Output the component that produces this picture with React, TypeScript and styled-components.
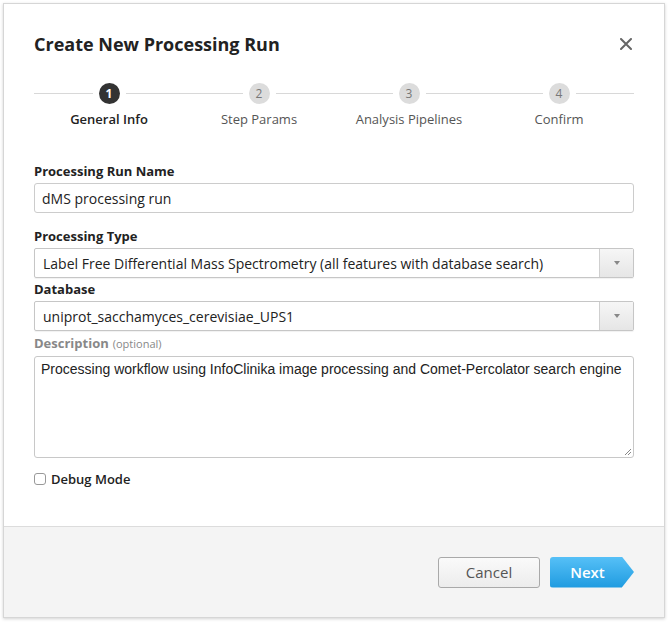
import React from "react";
import styled, { createGlobalStyle } from "styled-components";

const Global = createGlobalStyle`
  html, body { margin: 0; padding: 0; background: #fff; }
  body { font-family: "Open Sans", "Liberation Sans", sans-serif; color: #222; }
  * { box-sizing: border-box; }
`;

const Page = styled.div`
  padding: 3px 5px 5px 3px;
  width: 670px;
  height: 623px;
`;

const Modal = styled.div`
  width: 662px;
  height: 615px;
  border: 1px solid #d6d6d6;
  box-shadow: 0 1px 3px rgba(0,0,0,0.18);
  background: #fff;
  display: flex;
  flex-direction: column;
`;

const Body = styled.div`
  flex: 1;
  padding: 0 30px 0 30px;
  display: flex;
  flex-direction: column;
`;

const Header = styled.div`
  display: flex;
  align-items: center;
  justify-content: space-between;
  height: 78px;
  padding-top: 2px;
`;

const Title = styled.h1`
  margin: 0;
  font-size: 18px;
  font-weight: 700;
  color: #222;
`;

const Close = styled.button`
  border: none;
  background: none;
  padding: 0;
  width: 14px;
  height: 14px;
  margin-right: 1px;
  display: flex;
  align-items: center;
  justify-content: center;
`;

const Steps = styled.div`
  display: grid;
  grid-template-columns: repeat(4, 1fr);
  margin-top: 1px;
`;

const Step = styled.div`
  display: flex;
  flex-direction: column;
  align-items: center;
`;

const StepTrack = styled.div`
  width: 100%;
  display: flex;
  align-items: center;
  &::before, &::after {
    content: "";
    flex: 1;
    height: 1px;
    background: #d8d8d8;
    margin: 0 6px;
  }
  &::before { margin-left: 0; }
  &::after { margin-right: 0; }
`;

const Circle = styled.div<{ $active?: boolean }>`
  width: 21px;
  height: 21px;
  border-radius: 50%;
  background: ${(p) => (p.$active ? "#333" : "#dcdcdc")};
  color: ${(p) => (p.$active ? "#fff" : "#777")};
  font-size: 12px;
  font-weight: ${(p) => (p.$active ? 700 : 400)};
  display: flex;
  align-items: center;
  justify-content: center;
`;

const StepLabel = styled.div<{ $active?: boolean }>`
  margin-top: 6px;
  font-size: 13px;
  font-weight: ${(p) => (p.$active ? 600 : 400)};
  color: ${(p) => (p.$active ? "#222" : "#555")};
`;

const Form = styled.div`
  margin-top: 34px;
  display: flex;
  flex-direction: column;
`;

const Label = styled.label<{ $muted?: boolean; $gap?: number }>`
  display: block;
  font-size: 13px;
  font-weight: 700;
  color: ${(p) => (p.$muted ? "#888" : "#222")};
  margin-top: ${(p) => p.$gap ?? 0}px;
  margin-bottom: 3px;
  line-height: 18px;
`;

const Optional = styled.span`
  font-weight: 400;
  font-size: 11px;
  color: #888;
  margin-left: 4px;
`;

const Input = styled.div`
  height: 30px;
  border: 1px solid #ccc;
  border-radius: 3px;
  padding: 0 7px;
  font-size: 14px;
  display: flex;
  align-items: center;
  color: #222;
`;

const Select = styled.div`
  height: 30px;
  border: 1px solid #c6c6c6;
  border-radius: 2px;
  display: flex;
  box-shadow: 0 1px 1px rgba(0,0,0,0.06);
`;

const SelectValue = styled.div`
  flex: 1;
  padding: 0 8px;
  font-size: 14px;
  display: flex;
  align-items: center;
  color: #222;
`;

const SelectArrow = styled.div`
  width: 34px;
  border-left: 1px solid #cfcfcf;
  background: linear-gradient(#f6f6f6, #e6e6e6);
  display: flex;
  align-items: center;
  justify-content: center;
  &::after {
    content: "";
    border-left: 3px solid transparent;
    border-right: 3px solid transparent;
    border-top: 4px solid #888;
  }
`;

const TextArea = styled.div`
  height: 102px;
  border: 1px solid #c8c8c8;
  border-radius: 3px;
  padding: 4px 6px;
  font-family: "Liberation Sans", Arial, sans-serif;
  font-size: 14px;
  color: #222;
  position: relative;
  line-height: 16px;
`;

const Grip = styled.svg`
  position: absolute;
  right: 1px;
  bottom: 1px;
`;

const CheckRow = styled.label`
  display: flex;
  align-items: center;
  gap: 5px;
  margin-top: 12px;
  font-size: 13px;
  font-weight: 600;
  color: #222;
`;

const Box = styled.span`
  width: 12px;
  height: 12px;
  border: 1px solid #999;
  border-radius: 3px;
  background: #fff;
`;

const Footer = styled.div`
  height: 91px;
  border-top: 1px solid #dcdcdc;
  background: #f4f4f4;
  display: flex;
  align-items: center;
  justify-content: flex-end;
  padding: 0 30px 0 0;
  gap: 10px;
`;

const CancelBtn = styled.button`
  width: 102px;
  height: 31px;
  border: 1px solid #a9a9a9;
  border-radius: 3px;
  background: linear-gradient(#fafafa, #ececec);
  font-family: "Open Sans", sans-serif;
  font-size: 15px;
  color: #555;
`;

const NextBtn = styled.button`
  width: 84px;
  height: 31px;
  border: none;
  padding: 0 9px 0 0;
  background: linear-gradient(#56c0f7, #1f9be0);
  clip-path: polygon(0 0, 85.5% 0, 100% 50%, 85.5% 100%, 0 100%);
  border-radius: 3px 0 0 3px;
  font-family: "Open Sans", sans-serif;
  font-size: 15px;
  font-weight: 600;
  color: #fff;
`;

const steps = ["General Info", "Step Params", "Analysis Pipelines", "Confirm"];

export default function App() {
  return (
    <>
      <Global />
      <Page>
        <Modal>
          <Body>
            <Header>
              <Title>Create New Processing Run</Title>
              <Close aria-label="Close">
                <svg width="12" height="12" viewBox="0 0 12 12">
                  <path d="M1 1L11 11M11 1L1 11" stroke="#666" strokeWidth="2" strokeLinecap="round" />
                </svg>
              </Close>
            </Header>
            <Steps>
              {steps.map((s, i) => (
                <Step key={s}>
                  <StepTrack>
                    <Circle $active={i === 0}>{i + 1}</Circle>
                  </StepTrack>
                  <StepLabel $active={i === 0}>{s}</StepLabel>
                </Step>
              ))}
            </Steps>
            <Form>
              <Label>Processing Run Name</Label>
              <Input>dMS processing run</Input>
              <Label $gap={14}>Processing Type</Label>
              <Select>
                <SelectValue>Label Free Differential Mass Spectrometry (all features with database search)</SelectValue>
                <SelectArrow />
              </Select>
              <Label $gap={2}>Database</Label>
              <Select>
                <SelectValue>uniprot_sacchamyces_cerevisiae_UPS1</SelectValue>
                <SelectArrow />
              </Select>
              <Label $gap={3} $muted>
                Description<Optional>(optional)</Optional>
              </Label>
              <TextArea>
                Processing workflow using InfoClinika image processing and Comet-Percolator search engine
                <Grip width="8" height="8" viewBox="0 0 8 8">
                  <path d="M7 1L1 7M7 4L4 7" stroke="#888" strokeWidth="1" />
                </Grip>
              </TextArea>
              <CheckRow>
                <Box />
                Debug Mode
              </CheckRow>
            </Form>
          </Body>
          <Footer>
            <CancelBtn>Cancel</CancelBtn>
            <NextBtn>Next</NextBtn>
          </Footer>
        </Modal>
      </Page>
    </>
  );
}
